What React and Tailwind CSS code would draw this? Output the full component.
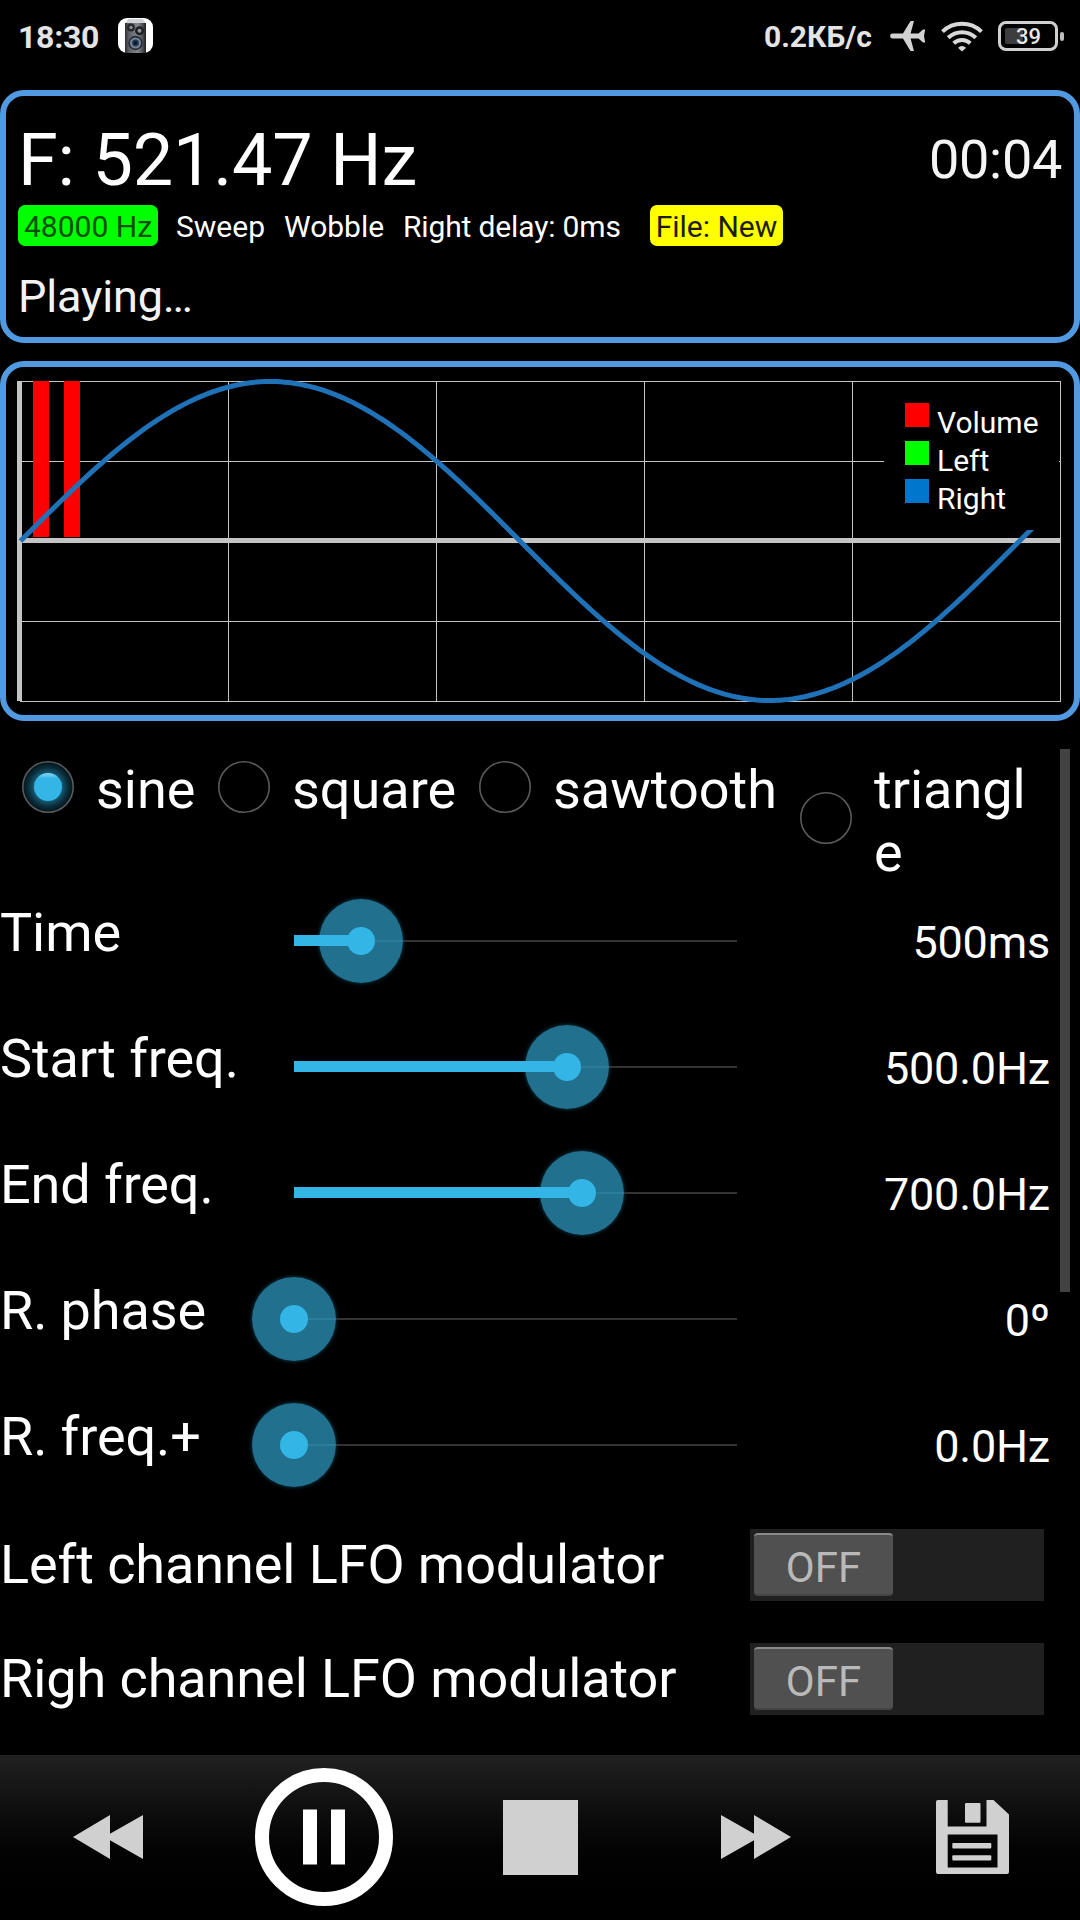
import React from "react";

const PERIOD = 999;
const wavePoints = Array.from({ length: 254 }, (_, i) => {
  const x = i * 4;
  const y = 541 - 159.5 * Math.sin((2 * Math.PI * x) / PERIOD);
  return `${20.5 + x},${y.toFixed(2)}`;
}).join(" ");

function SpeakerIcon() {
  return (
    <svg className="ml-[19px] mb-[2px] h-[35px] w-[35px]" viewBox="0 0 35 35">
      <defs>
        <linearGradient id="cabinet" x1="0" x2="1" y1="0" y2="0">
          <stop offset="0" stopColor="#2b2c30" />
          <stop offset="0.18" stopColor="#5c5f64" />
          <stop offset="0.6" stopColor="#85888d" />
          <stop offset="0.85" stopColor="#4a4c50" />
          <stop offset="1" stopColor="#1b1c1f" />
        </linearGradient>
      </defs>
      <rect width="35" height="35" rx="9" fill="#fff" />
      <path d="M10 1h15l3 5H7z" fill="#d0d1d3" />
      <rect x="7" y="5" width="21" height="30" fill="url(#cabinet)" />
      <circle cx="13" cy="9.5" r="3.9" fill="#24262b" />
      <circle cx="13" cy="9.5" r="1.7" fill="#8a8d93" />
      <circle cx="21.5" cy="12.8" r="4.5" fill="#1e2025" />
      <circle cx="21.5" cy="12.8" r="2" fill="#8f939a" />
      <circle cx="17.5" cy="25" r="7.2" fill="#252b35" />
      <circle cx="17.5" cy="25" r="5.6" fill="#75849a" />
      <circle cx="17.5" cy="25" r="3.4" fill="#22364f" />
      <circle cx="17.5" cy="25" r="1.7" fill="#0c1a28" />
    </svg>
  );
}

function StatusBar() {
  return (
    <header className="mb-[18px] flex h-[72px] items-center pr-[16px] pl-[18px] text-[#e4e4e4]">
      <span className="pt-px text-[32px] leading-none font-bold tracking-[-0.25px]">18:30</span>
      <SpeakerIcon />
      <span className="ml-auto pt-px text-[30px] leading-none font-bold">0.2КБ/с</span>
      <svg className="ml-[18px] h-[30px] w-[36px]" viewBox="0 0 36 30" fill="#d2d2d2">
        <path d="M2.5 12.6H13L20.2.6Q20.6 0 21.3 0H24L20.6 12.6H28.5L33 8.6H35.2L34 15L35.2 21.4H33L28.5 17.4H20.6L24 30H21.3Q20.6 30 20.2 29.4L13 17.4H2.5A2.4 2.4 0 0 1 2.5 12.6Z" />
      </svg>
      <svg className="ml-[15px] h-[31px] w-[42px]" viewBox="0 0 42 31" fill="none" stroke="#d8d8d8" strokeWidth="4">
        <path d="M1.5 10.6A28 28 0 0 1 40.5 10.6" />
        <path d="M7.2 16.8A20 20 0 0 1 34.8 16.8" />
        <path d="M12.7 22.3A12 12 0 0 1 29.3 22.3" />
        <path d="M21 30.5L17 26.8Q21 23 25 26.8Z" fill="#d8d8d8" stroke="none" />
      </svg>
      <div className="ml-[15px] flex items-center">
        <div className="flex h-[30px] w-[60px] items-center rounded-[8px] border-[3px] border-[#d0d0d0] p-[4px]">
          <div className="h-full w-[18px] rounded-[2px] bg-[#3d3d3d]" />
          <span className="-ml-[7px] pt-px text-[22px] leading-none font-medium text-[#e8e8e8]">39</span>
        </div>
        <div className="ml-[2px] h-[9px] w-[4px] rounded-[2px] bg-[#bdbdbd]" />
      </div>
    </header>
  );
}

function InfoPanel() {
  return (
    <section className="h-[253px] rounded-[24px] border-[6px] border-[#5199e0] pt-[19px] pr-[12px] pl-[12px]">
      <div className="flex h-[90px] items-center justify-between">
        <h1 className="pt-[2px] text-[72px] leading-[90px] tracking-[-0.2px]">F: 521.47 Hz</h1>
        <span className="text-[54px] leading-[90px] tracking-[-0.3px] text-[#f5f5f5]">00:04</span>
      </div>
      <div className="flex h-[41px] text-[30px] leading-[43px] whitespace-nowrap">
        <span className="w-[140px] rounded-[7px] bg-[#00ff00] text-center text-[#064d06]">48000 Hz</span>
        <span className="ml-[18px] w-[108px]">Sweep</span>
        <span className="w-[119px]">Wobble</span>
        <span className="w-[247px] tracking-[-0.15px]">Right delay: 0ms</span>
        <span className="w-[133px] rounded-[7px] bg-[#ffff00] text-center text-[#1c1c00]">File: New</span>
      </div>
      <p className="mt-[10px] h-[81px] text-[45px] leading-[81px] tracking-[-0.15px] text-[#f3f3f3]">Playing…</p>
    </section>
  );
}

const LEGEND = [
  { name: "Volume", color: "#ff0000", y: 403 },
  { name: "Left", color: "#00ff00", y: 441 },
  { name: "Right", color: "#0077cc", y: 479 },
];

function ScopePanel() {
  return (
    <section className="mt-[18px] h-[360px] rounded-[24px] border-[6px] border-[#5199e0]">
      <svg className="block h-[348px] w-[1068px]" viewBox="6 367 1068 348">
        <g fill="#c4c4c4" shapeRendering="crispEdges">
          {[228, 436, 644, 852, 1060].map((x) => (
            <rect key={x} x={x} y="381" width="1" height="320" />
          ))}
          {[381, 461, 621, 701].map((y) => (
            <rect key={y} x="20" y={y} width="1041" height="1" />
          ))}
          <rect x="17" y="381" width="5" height="320" />
          <rect x="20" y="538" width="1041" height="5" />
        </g>
        <rect x="33" y="381" width="16" height="156" fill="#ff0000" />
        <rect x="64" y="381" width="16" height="156" fill="#ff0000" />
        <polyline points={wavePoints} fill="none" stroke="#1f72b8" strokeWidth="5" />
        <rect x="884" y="388" width="175" height="142" fill="#000" />
        {LEGEND.map((item) => (
          <g key={item.name}>
            <rect x="905" y={item.y} width="24" height="24" fill={item.color} />
            <text x="937" y={item.y + 30} fill="#fff" className="text-[30px]">
              {item.name}
            </text>
          </g>
        ))}
      </svg>
    </section>
  );
}

function Radio({ label, checked, className, textClass }) {
  return (
    <label className={"flex items-center self-start " + className}>
      <svg className="mr-[22px] mb-[6px] h-[52px] w-[52px] shrink-0 overflow-visible" viewBox="0 0 52 52">
        {checked && (
          <>
            <defs>
              <radialGradient id="glow">
                <stop offset="0.5" stopColor="#1a6683" />
                <stop offset="0.8" stopColor="#0a2c39" />
                <stop offset="1" stopColor="#03141b" />
              </radialGradient>
              <linearGradient id="dot" x1="0" x2="0" y1="0" y2="1">
                <stop offset="0" stopColor="#8bd6f1" />
                <stop offset="0.2" stopColor="#33b5e5" />
              </linearGradient>
            </defs>
            <circle cx="26" cy="26" r="25" fill="url(#glow)" />
            <circle cx="26" cy="26" r="14" fill="url(#dot)" />
          </>
        )}
        <circle cx="26" cy="26" r="25.2" fill="none" stroke="#5a5a5a" strokeWidth="1.6" />
      </svg>
      <span className={"text-[54px] leading-[63px] " + (textClass || "")}>{label}</span>
    </label>
  );
}

const SLIDERS = [
  { label: "Time", value: "500ms", offset: 67 },
  { label: "Start freq.", value: "500.0Hz", offset: 273 },
  { label: "End freq.", value: "700.0Hz", offset: 288 },
  { label: "R. phase", value: "0º", offset: 0 },
  { label: "R. freq.+", value: "0.0Hz", offset: 0 },
];

function SliderRow({ label, value, offset }) {
  return (
    <div className="flex h-[126px] items-center">
      <span className="w-[294px] pb-[17px] text-[54px] leading-[63px] tracking-[-0.1px] whitespace-nowrap">{label}</span>
      <div className="relative flex h-[84px] w-[443px] items-center">
        <div className="mb-px h-[2px] w-full bg-[#333]" />
        <div
          className="absolute top-0 h-[84px] w-[84px] rounded-full bg-[#2b96bd]/75 shadow-[0_0_4px_#12485c]"
          style={{ left: offset - 42 }}
        />
        <div className="absolute top-[36px] left-0 h-[11px] bg-[#33b5e5]" style={{ width: offset }} />
        <div
          className="absolute top-[28px] h-[28px] w-[28px] rounded-full bg-[#33b5e5]"
          style={{ left: offset - 14 }}
        />
      </div>
      <span className="mr-[30px] ml-auto pt-[2px] text-[45px] leading-[53px] tracking-[-0.2px]">{value}</span>
    </div>
  );
}

function SwitchRow({ label }) {
  return (
    <div className="flex h-[114px] items-center justify-between pr-[36px]">
      <span className="pb-[2px] text-[54px] leading-[63px] tracking-[-0.08px] whitespace-nowrap">{label}</span>
      <div className="h-[72px] w-[294px] bg-[#202020] p-[4px]">
        <div className="h-[63px] w-[139px] rounded-[4px] border-t-2 border-b-2 border-t-[#8a8a8a] border-b-[#444] bg-[#505050] text-center text-[42px] leading-[65px] text-[#b9b9b9]">
          OFF
        </div>
      </div>
    </div>
  );
}

function PlayerBar() {
  return (
    <footer className="grid h-[165px] grid-cols-5 items-center justify-items-center bg-linear-to-b from-[#212121] to-black pb-px">
      <svg className="h-[44px] w-[70px]" viewBox="0 0 70 44" fill="#d0d0d0">
        <path d="M0 22L37 0V18.8L70 0V44L37 25.2V44Z" />
      </svg>
      <svg className="h-[138px] w-[138px]" viewBox="0 0 138 138">
        <circle cx="69" cy="69" r="62" fill="none" stroke="#fff" strokeWidth="14" />
        <path d="M48 41.5h14v55H48zM76 41.5h14v55H76z" fill="#fff" />
      </svg>
      <div className="h-[75px] w-[75px] bg-[#d0d0d0]" />
      <svg className="h-[44px] w-[70px]" viewBox="0 0 70 44" fill="#d0d0d0">
        <path d="M70 22L33 0V18.8L0 0V44L33 25.2V44Z" />
      </svg>
      <svg className="h-[74px] w-[73px]" viewBox="0 0 73 74" fill="#d0d0d0" fillRule="evenodd">
        <path d="M2 0H11.7V26.5H50.5V0H57.5L73 14.5V72Q73 74 71 74H2Q0 74 0 72V2Q0 0 2 0ZM11.7 34.5V67.5H61.5V34.5Z" />
        <rect x="29" y="3" width="15.5" height="19.7" rx="1" />
        <rect x="16.3" y="43" width="39" height="5.4" rx="1" />
        <rect x="16.3" y="55.2" width="39" height="5.4" rx="1" />
      </svg>
    </footer>
  );
}

export default function App() {
  return (
    <div className="flex h-[1920px] w-[1080px] flex-col overflow-hidden bg-black font-['Roboto',sans-serif] text-white">
      <StatusBar />
      <InfoPanel />
      <ScopePanel />
      <main className="relative h-[1034px] pt-[37px]">
        <div className="flex h-[120px] pl-[22px]">
          <Radio label="sine" checked className="w-[196px]" />
          <Radio label="square" className="w-[261px]" />
          <Radio label="sawtooth" className="w-[321px]" />
          <Radio label="triangle" className="w-[235px]" textClass="w-[160px] break-all" />
        </div>
        {SLIDERS.map((row) => (
          <SliderRow key={row.label} {...row} />
        ))}
        <SwitchRow label="Left channel LFO modulator" />
        <SwitchRow label="Righ channel LFO modulator" />
        <div className="absolute top-[28px] right-[10px] h-[543px] w-[10px] bg-[#424242]" />
      </main>
      <PlayerBar />
    </div>
  );
}
